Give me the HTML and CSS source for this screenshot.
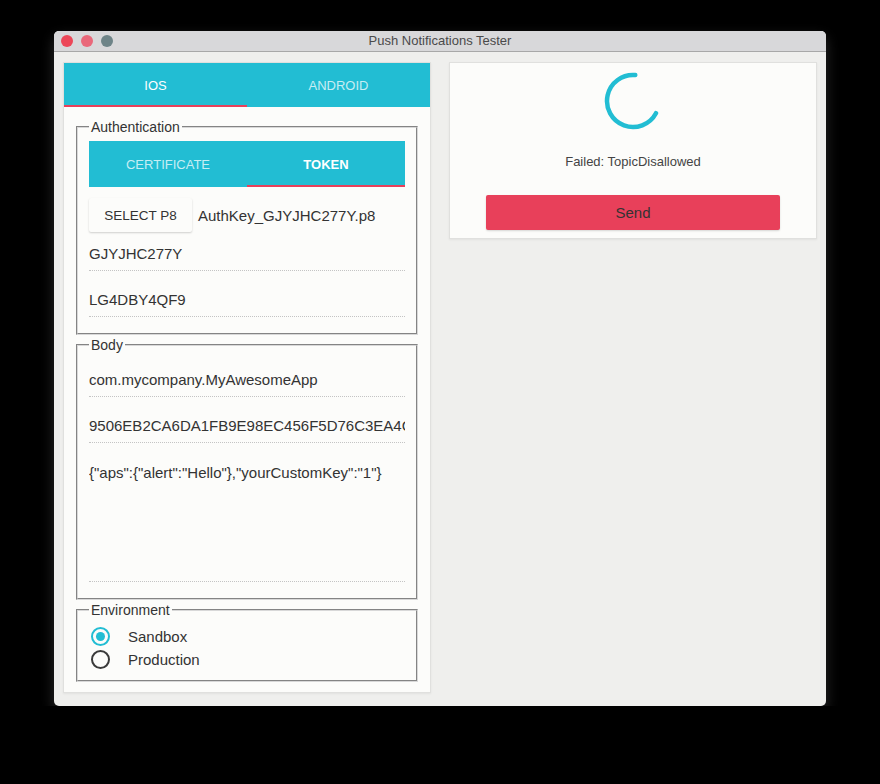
FILE: index.html
```html
<!DOCTYPE html>
<html lang="en">
<head>
<meta charset="utf-8">
<title>Push Notifications Tester</title>
<link rel="stylesheet" href="styles.css">
</head>
<body>
<div class="window">
  <div class="titlebar">
    <div class="lights">
      <span class="light light-close"></span>
      <span class="light light-min"></span>
      <span class="light light-max"></span>
    </div>
    <div class="title">Push Notifications Tester</div>
    <div></div>
  </div>
  <div class="content">
    <div class="card card-left">
      <div class="tabs">
        <div class="tab tab-active">IOS</div>
        <div class="tab">ANDROID</div>
      </div>

      <fieldset class="group group-auth">
        <legend>Authentication</legend>
        <div class="tabs tabs-inner">
          <div class="tab">CERTIFICATE</div>
          <div class="tab tab-active tab-bold">TOKEN</div>
        </div>
        <div class="file-row">
          <div class="btn-file">SELECT P8</div>
          <div class="file-name">AuthKey_GJYJHC277Y.p8</div>
        </div>
        <div class="field field-after-row">GJYJHC277Y</div>
        <div class="field">LG4DBY4QF9</div>
      </fieldset>

      <fieldset class="group group-body">
        <legend>Body</legend>
        <div class="field field-first">com.mycompany.MyAwesomeApp</div>
        <div class="field">9506EB2CA6DA1FB9E98EC456F5D76C3EA4C2B1A7D9F0E3C8B6A5D4E2F1C0B9A8</div>
        <div class="field field-area">{"aps":{"alert":"Hello"},"yourCustomKey":"1"}</div>
      </fieldset>

      <fieldset class="group group-env">
        <legend>Environment</legend>
        <div class="radio-row">
          <span class="radio radio-on"><span class="radio-dot"></span></span>
          <span class="radio-label">Sandbox</span>
        </div>
        <div class="radio-row">
          <span class="radio"></span>
          <span class="radio-label">Production</span>
        </div>
      </fieldset>
    </div>

    <div class="card card-right">
      <svg class="spinner" width="60" height="60" viewBox="0 0 60 60">
        <path d="M32.27 4.1 A26 26 0 1 0 52.96 42.21" fill="none" stroke="#22bdd3" stroke-width="4.5" stroke-linecap="round"/>
      </svg>
      <div class="status">Failed: TopicDisallowed</div>
      <div class="btn-send">Send</div>
    </div>
  </div>
</div>
</body>
</html>
```

FILE: styles.css
```css
* { box-sizing: border-box; }

html, body {
  margin: 0;
  background: #000;
}

body {
  padding: 31px 54px 0;
  font-family: "Liberation Sans", Arial, sans-serif;
  color: #333;
}

.window {
  width: 772px;
  background: #efefed;
  border-radius: 5px;
  overflow: hidden;
  box-shadow: 0 6px 14px rgba(120, 120, 120, 0.35);
}

.titlebar {
  height: 21px;
  background: #d8d8da;
  border-bottom: 1px solid #a8a8a8;
  display: grid;
  grid-template-columns: 1fr auto 1fr;
  align-items: center;
}

.lights {
  display: flex;
  gap: 8px;
  padding-left: 7px;
}

.light {
  width: 12px;
  height: 12px;
  border-radius: 50%;
}
.light-close { background: #ec4758; }
.light-min { background: #e9687a; }
.light-max { background: #6e8488; }

.title {
  font-size: 13px;
  line-height: 20px;
  color: #4a4a4a;
}

.content {
  display: flex;
  align-items: flex-start;
  gap: 18px;
  padding: 10px 9px 13px;
}

.card {
  width: 368px;
  background: #fcfcfa;
  border: 1px solid #e0e0de;
  box-shadow: 0 1px 2px rgba(0, 0, 0, 0.06);
}

.card-left {
  padding-bottom: 10px;
}

.tabs {
  display: flex;
  height: 44px;
  background: #22bdd3;
}

.tab {
  flex: 1;
  display: flex;
  align-items: center;
  justify-content: center;
  font-size: 13px;
  color: rgba(255, 255, 255, 0.75);
  border-bottom: 2px solid transparent;
  padding-top: 2px;
}

.tab-active {
  color: #fff;
  border-bottom-color: #e8405a;
}

.tab-bold { font-weight: bold; }

.tabs-inner {
  height: 46px;
}

.group {
  margin: 12px 12px 0;
  padding: 0 11px 16px;
  border: 2px groove #d8d8d8;
  min-width: 0;
}

.group + .group {
  margin-top: 2px;
}

.group legend {
  padding: 0 2px;
  font-size: 14px;
  line-height: 16px;
  color: #333;
}

.group-auth .tabs-inner {
  margin-top: 6px;
}

.file-row {
  display: flex;
  align-items: center;
  margin-top: 11px;
  height: 34px;
}

.btn-file {
  width: 103px;
  height: 34px;
  display: flex;
  align-items: center;
  justify-content: center;
  font-size: 13.5px;
  color: #333;
  background: #fcfcfa;
  border-radius: 2px;
  box-shadow: 0 1px 2px rgba(0, 0, 0, 0.18);
}

.file-name {
  margin-left: 6px;
  font-size: 15px;
}

.field {
  height: 46px;
  display: flex;
  align-items: flex-end;
  padding: 0 0 7px 0;
  font-size: 15px;
  line-height: 18px;
  border-bottom: 1px dotted #c4c4c4;
  white-space: nowrap;
  overflow: hidden;
}

.field-after-row { height: 39px; }
.field-first { height: 44px; }

.field-area {
  height: 139px;
  align-items: flex-start;
  padding-top: 21px;
}

.group-env {
  padding-top: 7px;
  padding-bottom: 9px;
}

.radio-row {
  height: 23px;
  display: flex;
  align-items: center;
  padding-left: 2px;
}

.radio {
  width: 19px;
  height: 19px;
  border-radius: 50%;
  border: 2px solid #3a3a3a;
  display: flex;
  align-items: center;
  justify-content: center;
}

.radio-on {
  border-color: #22bdd3;
}

.radio-dot {
  width: 9px;
  height: 9px;
  border-radius: 50%;
  background: #22bdd3;
}

.radio-label {
  margin-left: 18px;
  font-size: 15px;
  color: #333;
}

.card-right {
  display: flex;
  flex-direction: column;
  align-items: center;
  padding: 8px 0 8px;
}

.spinner {
  display: block;
}

.status {
  margin-top: 22px;
  font-size: 13px;
  line-height: 18px;
  color: #444;
}

.btn-send {
  margin-top: 24px;
  width: 294px;
  height: 35px;
  background: #e8405a;
  border-radius: 2px;
  display: flex;
  align-items: center;
  justify-content: center;
  font-size: 15px;
  color: #333;
  box-shadow: 0 1px 2px rgba(0, 0, 0, 0.15);
}
```
